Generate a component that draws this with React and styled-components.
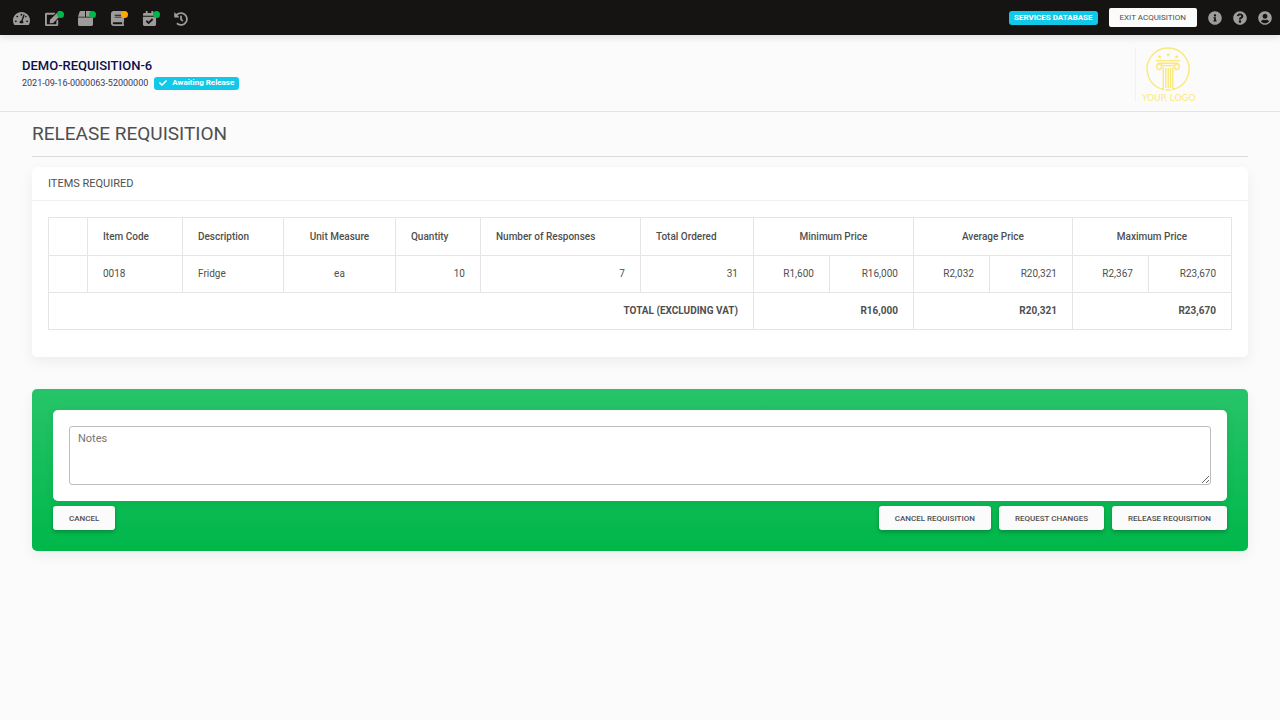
import React from "react";
import styled, { createGlobalStyle } from "styled-components";
import {
  FaTachometerAlt,
  FaEdit,
  FaBox,
  FaBook,
  FaCalendarCheck,
  FaHistory,
  FaInfoCircle,
  FaQuestionCircle,
  FaUserCircle,
  FaCheck,
} from "react-icons/fa";

const GlobalStyle = createGlobalStyle`
  *, *::before, *::after { box-sizing: border-box; }
  body {
    margin: 0;
    background: #fbfbfb;
    color: #4f4f4f;
    font-family: Roboto, "Liberation Sans", sans-serif;
    font-size: 10px;
  }
  button, textarea { font-family: inherit; }
  h1, h2, p { margin: 0; font-weight: 400; }
`;

const TopBar = styled.header`
  display: flex;
  align-items: center;
  justify-content: space-between;
  height: 35px;
  padding: 0 8px 0 13px;
  background: #161412;
  box-shadow: 0 2px 8px rgba(0, 0, 0, 0.12);
`;

const NavIcons = styled.nav`
  display: flex;
  align-items: center;
  gap: 16px;
  padding-top: 2px;
`;

const NavLink = styled.a`
  position: relative;
  display: flex;
  align-items: center;
  justify-content: center;
  width: 16px;
  height: 16px;
  color: #9d9c9b;
  font-size: ${(p) => p.$size}px;

  svg { flex-shrink: 0; }
`;

const Dot = styled.span`
  position: absolute;
  top: 0;
  right: -3px;
  width: 7px;
  height: 7px;
  border-radius: 50%;
  background: ${(p) => p.$color};
`;

const BarActions = styled.div`
  display: flex;
  align-items: center;
  gap: 11px;
`;

const Badge = styled.span`
  display: inline-flex;
  align-items: center;
  gap: 5px;
  height: ${(p) => p.$height}px;
  padding: 0 5px;
  border-radius: 3px;
  background: #12c8e8;
  color: #fff;
  font-size: 8px;
  font-weight: 700;
`;

const ExitButton = styled.button`
  height: 19px;
  padding: 0 11px;
  border: 0;
  border-radius: 2px;
  background: #fbfbfb;
  color: #4f4f4f;
  font-size: 8px;
`;

const RoundLink = styled.a`
  display: flex;
  color: #9d9c9b;
  font-size: 14px;
`;

const SubHeader = styled.section`
  display: flex;
  justify-content: space-between;
  height: 77px;
  padding: 12px 84px 0 22px;
  border-bottom: 1px solid #e4e4e4;
`;

const Requisition = styled.div`
  padding-top: 11px;
`;

const ReqName = styled.h2`
  color: #10104c;
  font-size: 13px;
  font-weight: 500;
  line-height: 16px;
`;

const ReqMeta = styled.p`
  display: flex;
  align-items: center;
  gap: 6px;
  margin-top: 2px;
  color: #39395f;
  font-size: 9px;
  line-height: 14px;
`;

const LogoBox = styled.div`
  height: 55px;
  padding-left: 5px;
  border-left: 1px solid #f2f2f2;
`;

const Main = styled.main`
  padding: 11px 32px 32px;
`;

const PageTitle = styled.h1`
  padding-bottom: 11px;
  border-bottom: 1px solid #dcdcdc;
  font-size: 19px;
  line-height: 22px;
`;

const Card = styled.section`
  margin-top: 10px;
  border-radius: 5px;
  background: #fff;
  box-shadow: 0 5px 14px rgba(0, 0, 0, 0.06);
`;

const CardHeader = styled.h2`
  padding: 8px 16px;
  border-bottom: 1px solid #f0f0f0;
  font-size: 11px;
  line-height: 17px;
`;

const CardBody = styled.div`
  padding: 16px 16px 27px;
`;

const Table = styled.table`
  width: 100%;
  border-collapse: collapse;
  table-layout: fixed;
  font-size: 10px;
  line-height: 14px;
`;

const Cell = styled.td`
  height: 37px;
  padding: 0 15px;
  border: 1px solid #e5e5e5;
  font-weight: ${(p) => (p.$bold ? 700 : 400)};
  text-align: ${(p) => p.$align || "left"};
  white-space: nowrap;
`;

const HeadCell = styled(Cell)`
  height: 38px;
  font-weight: 500;
`;

const ReleasePanel = styled.form`
  margin-top: 32px;
  padding: 21px;
  border-radius: 5px;
  background: linear-gradient(#27c469, #00b74a);
  box-shadow: 0 5px 14px rgba(0, 0, 0, 0.06);
`;

const NotesCard = styled.div`
  padding: 16px;
  border-radius: 5px;
  background: #fff;
  box-shadow: 0 2px 8px rgba(0, 0, 0, 0.08);
`;

const Notes = styled.textarea`
  display: block;
  width: 100%;
  height: 59px;
  padding: 4px 8px;
  border: 1px solid #bdbdbd;
  border-radius: 3px;
  background: #fff;
  color: #4f4f4f;
  font-size: 11px;
  line-height: 16px;
  resize: vertical;
  &::placeholder { color: #757575; }
`;

const Actions = styled.div`
  display: flex;
  justify-content: space-between;
  margin-top: 5px;
`;

const ActionGroup = styled.div`
  display: flex;
  gap: 8px;
`;

const ActionButton = styled.button`
  height: 24px;
  padding: 0 16px;
  border: 0;
  border-radius: 3px;
  background: #fbfbfb;
  color: #4f4f4f;
  font-size: 8px;
  font-weight: 500;
  box-shadow: 0 2px 4px rgba(0, 0, 0, 0.25);
`;

const navItems = [
  { label: "Dashboard", Icon: FaTachometerAlt, size: 17 },
  { label: "Requisitions", Icon: FaEdit, size: 17, dot: "#00b74a" },
  { label: "Orders", Icon: FaBox, size: 15, dot: "#00b74a" },
  { label: "Catalogue", Icon: FaBook, size: 15, dot: "#ffa900" },
  { label: "Schedule", Icon: FaCalendarCheck, size: 15, dot: "#00b74a" },
  { label: "History", Icon: FaHistory, size: 14 },
];

const barLinks = [
  { label: "Information", Icon: FaInfoCircle },
  { label: "Help", Icon: FaQuestionCircle },
  { label: "Account", Icon: FaUserCircle },
];

const columnWidths = [39, 95, 101, 112, 85, 160, 113, 76, 84, 76, 83, 76, 83];

const headings = [
  { text: "" },
  { text: "Item Code" },
  { text: "Description" },
  { text: "Unit Measure", align: "center" },
  { text: "Quantity" },
  { text: "Number of Responses" },
  { text: "Total Ordered" },
  { text: "Minimum Price", align: "center", span: 2 },
  { text: "Average Price", align: "center", span: 2 },
  { text: "Maximum Price", align: "center", span: 2 },
];

const item = [
  { text: "" },
  { text: "0018" },
  { text: "Fridge" },
  { text: "ea", align: "center" },
  ...["10", "7", "31", "R1,600", "R16,000", "R2,032", "R20,321", "R2,367", "R23,670"].map(
    (text) => ({ text, align: "right" })
  ),
];

const totals = [
  { text: "TOTAL (EXCLUDING VAT)", span: 7 },
  { text: "R16,000", span: 2 },
  { text: "R20,321", span: 2 },
  { text: "R23,670", span: 2 },
];

const Star = ({ x, y }) => (
  <path
    transform={`translate(${x} ${y})`}
    fill="#fbe87c"
    d="M0-2.2.6-.7 2.2-.7 1 .4 1.4 2 0 1.1-1.4 2-1 .4-2.2-.7-.6-.7Z"
  />
);

const Logo = () => (
  <svg width="55" height="56" viewBox="0 0 55 56" role="img" aria-label="Your logo">
    <g fill="none" stroke="#fbe87c" strokeWidth="1.4">
      <path d="M22.300 20.500V42.500A21 21 0 1 1 31.800 42.500V20.500" />
      <path d="M15 13.600H39M16.500 16.200H37.500" />
      <path d="M20.500 18.600H33.500" />
      <ellipse cx="18.200" cy="19.800" rx="2.500" ry="2.700" />
      <ellipse cx="35.800" cy="19.800" rx="2.500" ry="2.700" />
      <path d="M24.800 21V41M27.200 21V41M29.500 21V41M24.500 43H29.800" />
    </g>
    <Star x={18.700} y={9.700} />
    <Star x={27.200} y={7.700} />
    <Star x={35.700} y={9.700} />
    <text x="1" y="54" fill="#fbe87c" fontFamily="'DejaVu Sans', sans-serif" fontSize="9">
      YOUR LOGO
    </text>
  </svg>
);

export default function App() {
  return (
    <>
      <GlobalStyle />
      <TopBar>
        <NavIcons aria-label="Main">
          {navItems.map(({ label, Icon, size, dot }) => (
            <NavLink key={label} href="#" aria-label={label} $size={size}>
              <Icon />
              {dot && <Dot $color={dot} />}
            </NavLink>
          ))}
        </NavIcons>
        <BarActions>
          <Badge $height={14}>SERVICES DATABASE</Badge>
          <ExitButton type="button">EXIT ACQUISITION</ExitButton>
          {barLinks.map(({ label, Icon }) => (
            <RoundLink key={label} href="#" aria-label={label}>
              <Icon />
            </RoundLink>
          ))}
        </BarActions>
      </TopBar>

      <SubHeader>
        <Requisition>
          <ReqName>DEMO-REQUISITION-6</ReqName>
          <ReqMeta>
            2021-09-16-0000063-52000000
            <Badge $height={13}>
              <FaCheck />
              Awaiting Release
            </Badge>
          </ReqMeta>
        </Requisition>
        <LogoBox>
          <Logo />
        </LogoBox>
      </SubHeader>

      <Main>
        <PageTitle>RELEASE REQUISITION</PageTitle>

        <Card>
          <CardHeader>ITEMS REQUIRED</CardHeader>
          <CardBody>
            <Table>
              <colgroup>
                {columnWidths.map((w, i) => (
                  <col key={i} style={{ width: `${(w / 1183) * 100}%` }} />
                ))}
              </colgroup>
              <thead>
                <tr>
                  {headings.map(({ text, align, span }, i) => (
                    <HeadCell as="th" scope="col" key={i} colSpan={span} $align={align}>
                      {text}
                    </HeadCell>
                  ))}
                </tr>
              </thead>
              <tbody>
                <tr>
                  {item.map(({ text, align }, i) => (
                    <Cell key={i} $align={align}>{text}</Cell>
                  ))}
                </tr>
                <tr>
                  {totals.map(({ text, span }) => (
                    <Cell key={text} colSpan={span} $align="right" $bold>{text}</Cell>
                  ))}
                </tr>
              </tbody>
            </Table>
          </CardBody>
        </Card>

        <ReleasePanel onSubmit={(e) => e.preventDefault()}>
          <NotesCard>
            <Notes aria-label="Notes" placeholder="Notes" />
          </NotesCard>
          <Actions>
            <ActionButton type="button">CANCEL</ActionButton>
            <ActionGroup>
              <ActionButton type="button">CANCEL REQUISITION</ActionButton>
              <ActionButton type="button">REQUEST CHANGES</ActionButton>
              <ActionButton type="submit">RELEASE REQUISITION</ActionButton>
            </ActionGroup>
          </Actions>
        </ReleasePanel>
      </Main>
    </>
  );
}
